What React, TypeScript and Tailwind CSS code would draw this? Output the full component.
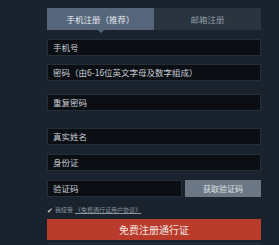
export default function App() {
  const font = { fontFamily: '"Noto Sans CJK SC", "Noto Sans", sans-serif' };
  const inputCls =
    "h-[17px] w-full bg-[#0b0f14] border border-[#242e39] flex items-center pl-[5px] text-[8.5px] text-[#c9ced4] leading-none";
  return (
    <div className="w-[279px] h-[245px] bg-[#1a232d] overflow-hidden" style={font}>
      <div className="ml-[47px] w-[214px] pt-[8px]">
        {/* tabs */}
        <div className="flex h-[22px]">
          <div className="relative w-[107px] bg-[#56667a] flex items-center justify-center text-[8.5px] text-[#e4e9ef]">
            手机注册（推荐）
            <span className="absolute left-1/2 -bottom-[3px] -translate-x-1/2 w-0 h-0 border-l-[3px] border-r-[3px] border-t-[3px] border-l-transparent border-r-transparent border-t-[#56667a]"></span>
          </div>
          <div className="flex-1 bg-[#29343f] flex items-center justify-center text-[8.5px] text-[#8f9aa6]">
            邮箱注册
          </div>
        </div>

        <div className={`${inputCls} mt-[9px]`}>手机号</div>
        <div className={`${inputCls} mt-[8px]`}>密码（由6-16位英文字母及数字组成）</div>
        <div className={`${inputCls} mt-[13px]`}>重复密码</div>
        <div className={`${inputCls} mt-[17px]`}>真实姓名</div>
        <div className={`${inputCls} mt-[9px]`}>身份证</div>

        <div className="flex mt-[9px] gap-[3px]">
          <div className="h-[17px] w-[135px] bg-[#0b0f14] border border-[#242e39] flex items-center pl-[5px] text-[8.5px] text-[#c9ced4] leading-none">
            验证码
          </div>
          <div className="h-[17px] flex-1 bg-[#6b7784] flex items-center justify-center text-[8px] text-[#dfe3e8]">
            获取验证码
          </div>
        </div>

        <div className="flex items-center mt-[8px] h-[10px] gap-[2px] text-[6px] text-[#8c97a2] leading-none">
          <span className="text-[7px] text-[#c8ced6]">✔</span>
          <span>我接受</span>
          <span className="underline">《免费通行证用户协议》</span>
        </div>

        <div className="mt-[4px] h-[21px] bg-[#b83b2b] flex items-center justify-center text-[10px] text-[#f5e6e2]">
          免费注册通行证
        </div>
        <div className="mt-[3px] h-[6px] border-t border-[#27313c]"></div>
      </div>
    </div>
  );
}
